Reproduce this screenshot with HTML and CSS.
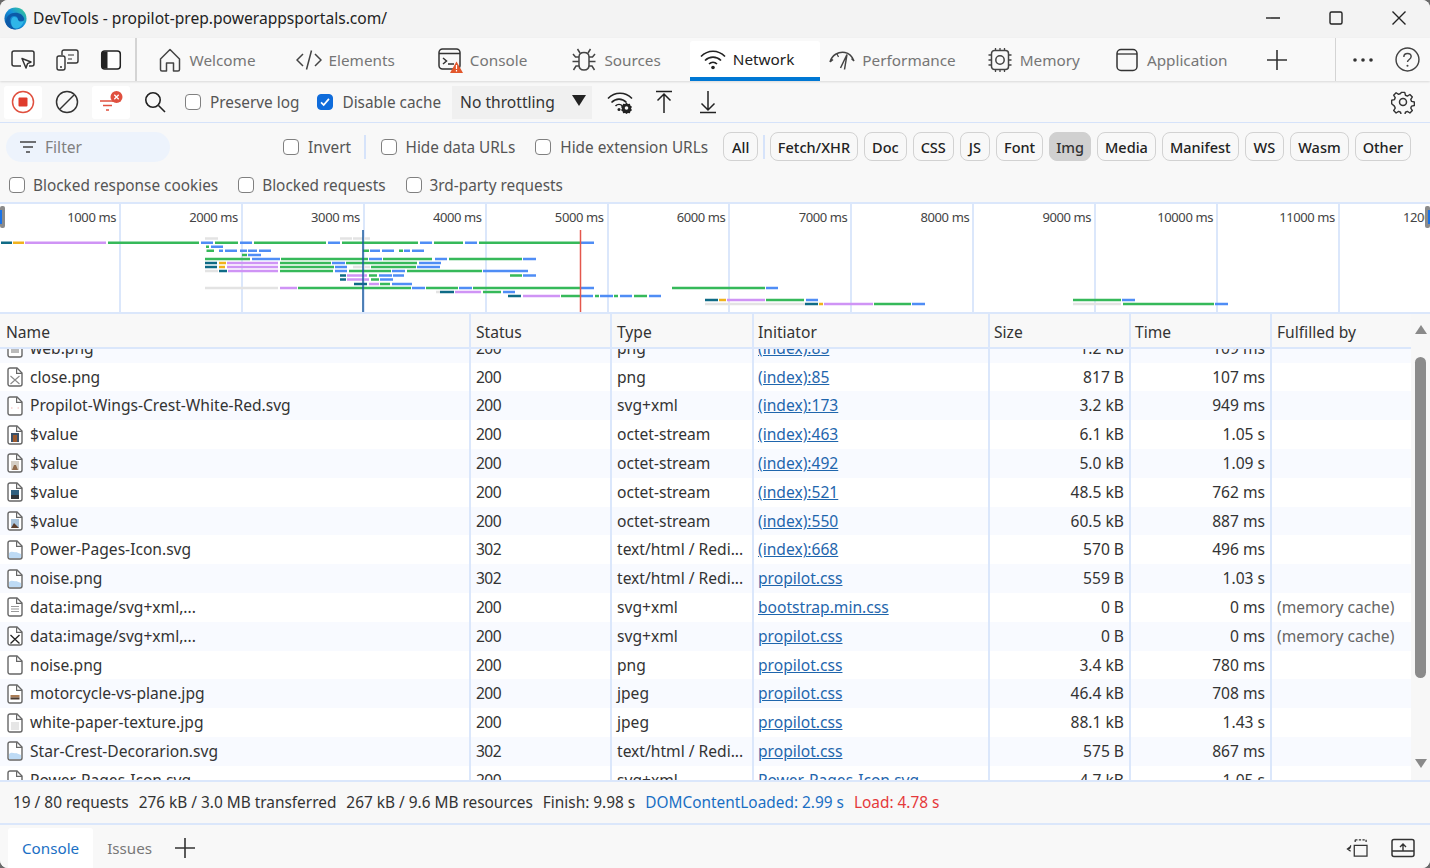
FILE: index.html
```html
<!DOCTYPE html>
<html lang="en">
<head>
<meta charset="utf-8">
<title>DevTools</title>
<link rel="stylesheet" href="styles.css">
</head>
<body>
<svg class="defs" width="0" height="0" aria-hidden="true">
  <defs>
    <symbol id="page" viewBox="0 0 16 20"><path d="M1 3a2 2 0 0 1 2-2h7l5 5v11a2 2 0 0 1-2 2H3a2 2 0 0 1-2-2z" fill="#fff" stroke="#666" stroke-width="1.4"/><path d="M9.6 1.2V6.4H15" fill="none" stroke="#666" stroke-width="1.2"/></symbol>
    <symbol id="plus" viewBox="0 0 20 20"><path d="M10 0v20M0 10h20" stroke="#333" stroke-width="1.6"/></symbol>
    <linearGradient id="edgeA" x1="0" y1="1" x2="1" y2="0"><stop offset="0" stop-color="#0b4f9e"/><stop offset=".55" stop-color="#1593dc"/><stop offset="1" stop-color="#3fd08a"/></linearGradient>
  </defs>
</svg>
<div class="window">
  <header class="titlebar">
    <svg class="logo" viewBox="0 0 24 24"><circle cx="12" cy="12" r="11.5" fill="url(#edgeA)"/><path d="M2 16C2 9 7 6 12 6c4.500 0 8 2.500 9 6 .4 2-1.500 3.500-4 3.500-2 0-3-.6-3-1.500 1-1.500 0-4.500-3.500-4.500C7 9.500 5 13 6.500 17c1 3 3.500 5 6 6.500C7 23.500 2 20.500 2 16z" fill="#0c5aa8"/><path d="M8 12c2-2.500 6-1.500 6.500 1 .5 2 3 3 6 1.500-1 5-5 8-8.500 8-3 0-6-5-4-10.500z" fill="#2fb6e8"/></svg>
    <span class="title">DevTools - propilot-prep.powerappsportals.com/</span>
    <div class="winctl">
      <svg viewBox="0 0 16 16"><path d="M1 8h14" stroke="#222" stroke-width="1.4"/></svg>
      <svg viewBox="0 0 16 16"><rect x="2" y="2" width="12" height="12" rx="1.500" fill="none" stroke="#222" stroke-width="1.4"/></svg>
      <svg viewBox="0 0 16 16"><path d="M1.500 1.500l13 13M14.500 1.500l-13 13" stroke="#222" stroke-width="1.4"/></svg>
    </div>
  </header>

  <nav class="tabbar">
    <div class="tabtools">
      <svg class="ti" viewBox="0 0 26 22"><path d="M11 17H4a2 2 0 0 1-2-2V4a2 2 0 0 1 2-2h18a2 2 0 0 1 2 2v11a2 2 0 0 1-2 2h-3" fill="none" stroke="#333" stroke-width="1.500"/><path d="M12 9.500l9 3.500-3.500 1.700 0 0L16 19z" fill="#fff" stroke="#333" stroke-width="1.500" stroke-linejoin="round"/></svg>
      <svg class="ti" viewBox="0 0 26 22"><path d="M8 6V3a2 2 0 0 1 2-2h12a2 2 0 0 1 2 2v9a2 2 0 0 1-2 2h-9" fill="none" stroke="#333" stroke-width="1.400"/><rect x="3" y="7" width="8" height="14" rx="2" fill="#fbfbfb" stroke="#333" stroke-width="1.400"/><path d="M14 6h6M14 10h4" stroke="#333" stroke-width="1.200"/><path d="M6 18h2" stroke="#333" stroke-width="1.400"/></svg>
      <svg class="ti" viewBox="0 0 26 22"><rect x="3.700" y="2" width="18.600" height="18" rx="3" fill="#fff" stroke="#222" stroke-width="1.500"/><path d="M5 2.500h4.500v17H5a1 1 0 0 1-1-1v-15a1 1 0 0 1 1-1z" fill="#222"/></svg>
    </div>
    <div class="vsep"></div>
    <div class="tabs">
      <a class="tab tab-welcome"><svg class="tabicon" viewBox="0 0 26 26"><path d="M3.500 12L13 2.500 22.500 12v10.500a1.500 1.500 0 0 1-1.500 1.500h-4.500v-8h-7v8H5a1.500 1.500 0 0 1-1.500-1.500z" fill="none" stroke="#444" stroke-width="1.500" stroke-linejoin="round"/></svg>Welcome</a>
      <a class="tab tab-elements"><svg class="tabicon" viewBox="0 0 26 26"><path d="M7 7L1 13l6 6M19 7l6 6-6 6M15.500 3.500l-5 19" fill="none" stroke="#444" stroke-width="1.500"/></svg>Elements</a>
      <a class="tab tab-console"><svg class="tabicon" viewBox="0 0 26 26"><rect x="2" y="2" width="21" height="20" rx="3.500" fill="none" stroke="#333" stroke-width="1.500"/><path d="M2 6.500h21M6 11l3.500 3L6 17M11 17h6" fill="none" stroke="#333" stroke-width="1.500"/><path d="M19.500 14.500L26 26H13z" fill="#e2572c"/><path d="M19.500 18v4M19.500 23v1.500" stroke="#fff" stroke-width="1.200"/></svg>Console</a>
      <a class="tab tab-sources"><svg class="tabicon" viewBox="0 0 26 26"><path d="M8 10c0-3 2-4.500 5-4.500S18 7 18 10v8c0 3-2 5-5 5s-5-2-5-5z" fill="none" stroke="#444" stroke-width="1.500"/><path d="M9 6L6.500 2M17 6l2.500-4M8 10H4.500L2 7M18 10h3.500L24 7M8 14.500H1.500M18 14.500h6.500M8 19H5l-2.500 4M18 19h3l2.500 4" fill="none" stroke="#444" stroke-width="1.500"/></svg>Sources</a>
      <a class="tab tab-network active"><svg class="tabicon" viewBox="0 0 26 26"><path d="M1 10.500c7-7 17-7 24 0M5 14.500c4.500-4.500 11.500-4.500 16 0M9 18c2.300-2.200 5.700-2.200 8 0" fill="none" stroke="#222" stroke-width="1.700"/><circle cx="13" cy="21.500" r="1.800" fill="#222"/></svg>Network</a>
      <a class="tab tab-performance"><svg class="tabicon" viewBox="0 0 26 26"><path d="M1 15C3 8 9 4.500 16 5.500c4 .6 7 3.500 9 8.500M1 15l3-2.500M25 14l-2.500-2.500M11.500 21L18 7.500l-2.500 15" fill="none" stroke="#444" stroke-width="1.500"/><path d="M8 7l1.500 3" stroke="#444" stroke-width="1.300"/></svg>Performance</a>
      <a class="tab tab-memory"><svg class="tabicon" viewBox="0 0 26 26"><rect x="4.500" y="3.500" width="17" height="19" rx="3" fill="none" stroke="#444" stroke-width="1.500"/><circle cx="13" cy="13" r="4.200" fill="none" stroke="#444" stroke-width="1.500"/><path d="M8.500 1v2.500M13 1v2.500M17.500 1v2.500M8.500 22.500V25M13 22.500V25M17.500 22.500V25M1.500 8h3M1.500 13h3M1.500 18h3M21.500 8h3M21.500 13h3M21.500 18h3" stroke="#444" stroke-width="1.300"/></svg>Memory</a>
      <a class="tab tab-application"><svg class="tabicon" viewBox="0 0 26 26"><rect x="3" y="2.500" width="20" height="21" rx="4" fill="none" stroke="#333" stroke-width="1.500"/><path d="M3 7h20" stroke="#333" stroke-width="1.300"/></svg>Application</a>
      <svg class="addtab" viewBox="0 0 20 20"><use href="#plus"/></svg>
    </div>
    <div class="vsep vsep-right"></div>
    <svg class="more" viewBox="0 0 22 6"><circle cx="3" cy="3" r="1.800" fill="#333"/><circle cx="11" cy="3" r="1.800" fill="#333"/><circle cx="19" cy="3" r="1.800" fill="#333"/></svg>
    <svg class="help" viewBox="0 0 24 24"><circle cx="12" cy="12" r="11" fill="none" stroke="#444" stroke-width="1.400"/><path d="M8.500 9.500c0-2 1.500-3.300 3.500-3.300s3.500 1.300 3.500 3c0 2.800-3.500 2.800-3.500 5.300" fill="none" stroke="#444" stroke-width="1.400"/><circle cx="12" cy="18" r="1" fill="#444"/></svg>
  </nav>

  <section class="toolbar">
    <span class="tbtn tbtn-on"><svg viewBox="0 0 24 24" class="ic24"><circle cx="12" cy="12" r="10.500" fill="none" stroke="#e0503f" stroke-width="1.500"/><rect x="7.500" y="7.500" width="9" height="9" rx="1" fill="#df3b2c"/></svg></span>
    <span class="tbtn"><svg viewBox="0 0 24 24" class="ic24"><circle cx="12" cy="12" r="10.500" fill="none" stroke="#333" stroke-width="1.500"/><path d="M19 5L5 19" stroke="#333" stroke-width="1.500"/></svg></span>
    <span class="tbtn tbtn-on"><svg viewBox="0 0 26 24" class="ic24 wide"><path d="M2 11h15M5 15.500h9M8 20h3" stroke="#e0503f" stroke-width="1.600"/><circle cx="18.500" cy="7" r="6" fill="#e0503f"/><path d="M16.300 4.800l4.400 4.400M20.700 4.800l-4.400 4.400" stroke="#fff" stroke-width="1.300"/></svg></span>
    <span class="tbtn"><svg viewBox="0 0 24 24" class="ic24"><circle cx="10" cy="10" r="7.200" fill="none" stroke="#222" stroke-width="1.600"/><path d="M15.500 15.500L22 22" stroke="#222" stroke-width="1.600"/></svg></span>
    <label class="check check-preserve"><span class="box"></span>Preserve log</label>
    <label class="check check-cache"><span class="box on"><svg viewBox="0 0 16 16"><path d="M3.500 8.500l3 3 6-7" fill="none" stroke="#fff" stroke-width="2"/></svg></span>Disable cache</label>
    <div class="select">No throttling<span class="caret"></span></div>
    <span class="tbtn tbtn-net"><svg viewBox="0 0 26 24" class="ic24 wide"><path d="M1 8.500c7-7 17-7 24 0M4.500 12.500c4.500-4.500 10.500-4.500 15 0M8.500 16c2-2 5-2 7 0" fill="none" stroke="#222" stroke-width="1.600"/><circle cx="12" cy="19.500" r="1.500" fill="#222"/><path d="M19.500 12.500l1.400 1.500 2-.3.600 2 1.500 1-1 1.800 1 1.700-1.500 1-.6 2-2-.3-1.400 1.100-1.400-1.100-2 .3-.6-2-1.500-1 1-1.700-1-1.800 1.500-1 .6-2 2 .3z" fill="#222"/><circle cx="19.500" cy="18" r="1.800" fill="#f9f9f9"/></svg></span>
    <span class="tbtn"><svg viewBox="0 0 24 24" class="ic24"><path d="M4 1.500h16M12 23V4M5.500 10.500L12 4l6.500 6.500" fill="none" stroke="#222" stroke-width="1.500"/></svg></span>
    <span class="tbtn"><svg viewBox="0 0 24 24" class="ic24"><path d="M4 22.500h16M12 1v19M5.500 13.500L12 20l6.500-6.500" fill="none" stroke="#222" stroke-width="1.500"/></svg></span>
    <svg viewBox="0 0 24 24" class="ic24 gear"><path d="M10 1h4l.8 3.300 2.200.9 2.900-1.800 2.800 2.800-1.800 2.900.9 2.200 3.200.7v4l-3.200.7-.9 2.200 1.800 2.900-2.800 2.800-2.900-1.800-2.200.9-.8 3.300h-4l-.8-3.300-2.200-.9-2.900 1.800-2.800-2.800 1.800-2.900-.9-2.200L-1 14v-4l3.200-.7.900-2.200-1.800-2.900 2.800-2.800 2.900 1.800 2.200-.9z" transform="translate(1.500 1.500) scale(.875)" fill="none" stroke="#333" stroke-width="1.600" stroke-linejoin="round"/><circle cx="12" cy="12" r="3.500" fill="none" stroke="#333" stroke-width="1.500"/></svg>
  </section>

  <section class="filterrow">
    <div class="filterbox"><svg viewBox="0 0 16 12" class="filtericon"><path d="M0 1h16M3 6h10M6 11h4" stroke="#444" stroke-width="1.500"/></svg>Filter</div>
    <label class="check check-invert"><span class="box"></span>Invert</label>
    <span class="fsep fsep-a"></span>
    <label class="check check-data"><span class="box"></span>Hide data URLs</label>
    <label class="check check-ext"><span class="box"></span>Hide extension URLs</label>
    <div class="pills">
      <span class="pill pill-all">All</span>
      <span class="fsep"></span>
      <span class="pill">Fetch/XHR</span>
      <span class="pill">Doc</span>
      <span class="pill">CSS</span>
      <span class="pill pill-js">JS</span>
      <span class="pill">Font</span>
      <span class="pill sel">Img</span>
      <span class="pill">Media</span>
      <span class="pill">Manifest</span>
      <span class="pill pill-ws">WS</span>
      <span class="pill">Wasm</span>
      <span class="pill">Other</span>
    </div>
  </section>

  <section class="blockrow">
    <label class="check"><span class="box"></span>Blocked response cookies</label>
    <label class="check"><span class="box"></span>Blocked requests</label>
    <label class="check"><span class="box"></span>3rd-party requests</label>
  </section>

  <section class="overview">
    <div class="ruler">
      <div class="tick tick-first">1000 ms</div><div class="tick">2000 ms</div><div class="tick">3000 ms</div><div class="tick">4000 ms</div><div class="tick">5000 ms</div><div class="tick">6000 ms</div><div class="tick">7000 ms</div><div class="tick">8000 ms</div><div class="tick">9000 ms</div><div class="tick">10000 ms</div><div class="tick">11000 ms</div><div class="tick tick-last">12000 ms</div>
    </div>
    <svg class="bars" viewBox="0 202 1430 110" width="1430" height="110">
      <g class="g"><path d="M108 242.700h91M215 242.700h23M254 242.700h72M342 242.700h76M434 242.700h29M479 242.700h101M206 246.700h3M206.500 250.700h7.500M363 250.700h6M399 250.700h4M242 255h5M205 259h45M281 259h87M383 259h49M449 259h73M280 263h51M346 263h71M280 267h54M371 267h45M280 271h53M349 271h42M407 271h75M369 275.500h8M510 275.500h12M371 279.500h8M380 284h10M298 288h113M426 288h32M473 288h107M672 288h93M483 292h18M561 296h19M595 296h4M614 296h4M634 296h13M766 300h38M1073 300h48M874 304h37M1123 304h91"/></g>
      <g class="b"><path d="M201 242.700h12M240 242.700h12M328 242.700h12M420 242.700h12M465 242.700h12M581 242.700h13M211 246.700h12M219 250.700h4M225 250.700h12M240 250.700h7M248 250.700h9M259 250.700h12M370 250.700h10M382 250.700h12M404 250.700h6M412 250.700h12M248 255h13M252 259h28M369 259h13M435 259h12M523 259h13M332 263h13M419 263h22M335 267h12M417 267h23M335 271h12M392 271h13M483 271h45M379 275.500h13M393 275.500h11M523 275.500h13M380 279.500h13M392 284h20M412 288h13M459 288h13M581 288h13M766 288h12M503 292h12M581 296h12M600 296h13M620 296h12M649 296h12M806 300h12M1122 300h13M912 304h13M1215 304h13"/></g>
      <g class="t"><path d="M1 242.700h11M205 263h12M205 267h12M219 271h8M340 275.500h6M340 279.500h6M354 284h13M440 292h14M508 296h13M705 300h13M805 304h13"/></g>
      <g class="o"><path d="M13 242.700h11M219 263h7M219 267h6M719 300h7M819 304h4"/></g>
      <g class="p"><path d="M25 242.700h81M227 263h51M227 267h51M228 271h50M347 275.500h20M347 279.500h22M369 284h10M280 288h17M455 292h26M523 296h37M727 300h38M824 304h49"/></g>
      <g class="y"><path d="M205 238.500h13M340 238.500h12M353 238.500h17M205 271h13M353 267h17M205 288h73M436 292h4M705 304h100M1073 304h48"/></g>
      <path d="M363 230v82" class="dom"/>
      <path d="M580.500 230v82" class="load"/>
    </svg>
    <span class="grip grip-left"></span>
    <span class="grip grip-right"></span>
  </section>

  <section class="grid">
    <div class="gridmain">
      <div class="row head"><div>Name</div><div>Status</div><div>Type</div><div>Initiator</div><div>Size</div><div>Time</div><div>Fulfilled by</div></div>
      <div class="rows">
        <div class="rowsinner">
          <div class="row"><div class="nm"><svg class="fi" viewBox="0 0 16 20"><use href="#page"/><rect x="4" y="9" width="8" height="6" fill="#bbb"/></svg>web.png</div><div>200</div><div>png</div><div><a>(index):85</a></div><div class="r">1.2 kB</div><div class="r">109 ms</div><div></div></div>
          <div class="row"><div class="nm"><svg class="fi" viewBox="0 0 16 20"><use href="#page"/><path d="M3.500 9l9 8M12.500 9l-9 8" stroke="#888" stroke-width="1.100"/></svg>close.png</div><div>200</div><div>png</div><div><a>(index):85</a></div><div class="r">817 B</div><div class="r">107 ms</div><div></div></div>
          <div class="row"><div class="nm"><svg class="fi" viewBox="0 0 16 20"><use href="#page"/><path d="M4 12h1.500M10.500 12H12" stroke="#f3b7b7" stroke-width="1.200"/></svg>Propilot-Wings-Crest-White-Red.svg</div><div>200</div><div>svg+xml</div><div><a>(index):173</a></div><div class="r">3.2 kB</div><div class="r">949 ms</div><div></div></div>
          <div class="row"><div class="nm"><svg class="fi" viewBox="0 0 16 20"><use href="#page"/><rect x="4" y="8" width="8" height="9" fill="#3c5168"/><rect x="6" y="10" width="4" height="7" fill="#9c5a2f"/></svg>$value</div><div>200</div><div>octet-stream</div><div><a>(index):463</a></div><div class="r">6.1 kB</div><div class="r">1.05 s</div><div></div></div>
          <div class="row"><div class="nm"><svg class="fi" viewBox="0 0 16 20"><use href="#page"/><rect x="4" y="8" width="8" height="9" fill="#d5cfc5"/><path d="M5 17l2-5h2l2 5z" fill="#8f6a4b"/></svg>$value</div><div>200</div><div>octet-stream</div><div><a>(index):492</a></div><div class="r">5.0 kB</div><div class="r">1.09 s</div><div></div></div>
          <div class="row"><div class="nm"><svg class="fi" viewBox="0 0 16 20"><use href="#page"/><rect x="4" y="8" width="8" height="9" fill="#2f5f7f"/><rect x="4" y="13" width="8" height="4" fill="#2f3338"/></svg>$value</div><div>200</div><div>octet-stream</div><div><a>(index):521</a></div><div class="r">48.5 kB</div><div class="r">762 ms</div><div></div></div>
          <div class="row"><div class="nm"><svg class="fi" viewBox="0 0 16 20"><use href="#page"/><rect x="4" y="8" width="8" height="9" fill="#a9c3da"/><path d="M4 17l3-5 2 2 3 3z" fill="#5d3f2c"/></svg>$value</div><div>200</div><div>octet-stream</div><div><a>(index):550</a></div><div class="r">60.5 kB</div><div class="r">887 ms</div><div></div></div>
          <div class="row"><div class="nm"><svg class="fi" viewBox="0 0 16 20"><use href="#page"/><path d="M2 18v-5c3-3 5 0 7-1l5 2v4z" fill="#bedbf5"/></svg>Power-Pages-Icon.svg</div><div>302</div><div>text/html / Redi...</div><div><a>(index):668</a></div><div class="r">570 B</div><div class="r">496 ms</div><div></div></div>
          <div class="row"><div class="nm"><svg class="fi" viewBox="0 0 16 20"><use href="#page"/><path d="M2 18v-5c3-3 5 0 7-1l5 2v4z" fill="#bedbf5"/></svg>noise.png</div><div>302</div><div>text/html / Redi...</div><div><a>propilot.css</a></div><div class="r">559 B</div><div class="r">1.03 s</div><div></div></div>
          <div class="row"><div class="nm"><svg class="fi" viewBox="0 0 16 20"><use href="#page"/><path d="M4 9.500h8M4 12h8M4 14.500h8" stroke="#999" stroke-width="1"/></svg>data:image/svg+xml,...</div><div>200</div><div>svg+xml</div><div><a>bootstrap.min.css</a></div><div class="r">0 B</div><div class="r">0 ms</div><div class="mc">(memory cache)</div></div>
          <div class="row"><div class="nm"><svg class="fi" viewBox="0 0 16 20"><use href="#page"/><path d="M3.500 9l9 8.500M12.500 9l-9 8.500" stroke="#222" stroke-width="1.300"/></svg>data:image/svg+xml,...</div><div>200</div><div>svg+xml</div><div><a>propilot.css</a></div><div class="r">0 B</div><div class="r">0 ms</div><div class="mc">(memory cache)</div></div>
          <div class="row"><div class="nm"><svg class="fi" viewBox="0 0 16 20"><use href="#page"/></svg>noise.png</div><div>200</div><div>png</div><div><a>propilot.css</a></div><div class="r">3.4 kB</div><div class="r">780 ms</div><div></div></div>
          <div class="row"><div class="nm"><svg class="fi" viewBox="0 0 16 20"><use href="#page"/><rect x="3.500" y="11" width="9" height="2.500" fill="#ab7d55"/><rect x="3.500" y="13.500" width="9" height="2" fill="#4a3a30"/></svg>motorcycle-vs-plane.jpg</div><div>200</div><div>jpeg</div><div><a>propilot.css</a></div><div class="r">46.4 kB</div><div class="r">708 ms</div><div></div></div>
          <div class="row"><div class="nm"><svg class="fi" viewBox="0 0 16 20"><use href="#page"/><rect x="4" y="9" width="8" height="8" fill="#e6e6e6"/></svg>white-paper-texture.jpg</div><div>200</div><div>jpeg</div><div><a>propilot.css</a></div><div class="r">88.1 kB</div><div class="r">1.43 s</div><div></div></div>
          <div class="row"><div class="nm"><svg class="fi" viewBox="0 0 16 20"><use href="#page"/><path d="M2 18v-5c3-3 5 0 7-1l5 2v4z" fill="#bedbf5"/></svg>Star-Crest-Decorarion.svg</div><div>302</div><div>text/html / Redi...</div><div><a>propilot.css</a></div><div class="r">575 B</div><div class="r">867 ms</div><div></div></div>
          <div class="row"><div class="nm"><svg class="fi" viewBox="0 0 16 20"><use href="#page"/><circle cx="8" cy="13" r="3" fill="#b7a5ea"/></svg>Power-Pages-Icon.svg</div><div>200</div><div>svg+xml</div><div><a>Power-Pages-Icon.svg</a></div><div class="r">4.7 kB</div><div class="r">1.05 s</div><div></div></div>
        </div>
      </div>
    </div>
    <aside class="scrollbar">
      <span class="arrow up"></span>
      <span class="thumb"></span>
      <span class="arrow down"></span>
    </aside>
  </section>

  <footer class="status">
    <span>19 / 80 requests</span><span>276 kB / 3.0 MB transferred</span><span>267 kB / 9.6 MB resources</span><span>Finish: 9.98 s</span><span class="dcl">DOMContentLoaded: 2.99 s</span><span class="ld">Load: 4.78 s</span>
  </footer>

  <nav class="drawer">
    <a class="dtab on">Console</a>
    <a class="dtab">Issues</a>
    <svg class="addtab dplus" viewBox="0 0 20 20"><use href="#plus"/></svg>
    <svg class="dicon push" viewBox="0 0 26 22"><path d="M6 9.500L2.500 12 6 14.500M3 12c2 0 3-1 3-4" fill="none" stroke="#333" stroke-width="1.400"/><path d="M10 8h14v12H10z" fill="none" stroke="#333" stroke-width="1.400"/><path d="M11 2h12M11 2v4M23 2v4" fill="none" stroke="#333" stroke-width="1.400" stroke-dasharray="2.500 1.500"/></svg>
    <svg class="dicon" viewBox="0 0 24 20"><rect x="1" y="1.500" width="22" height="17" rx="2" fill="none" stroke="#333" stroke-width="1.500"/><path d="M1 13h22M12 13V6M9 9l3-3 3 3" fill="none" stroke="#333" stroke-width="1.400"/></svg>
  </nav>
</div>
</body>
</html>
```

FILE: styles.css
```css
* { box-sizing: border-box; }
html, body { margin: 0; padding: 0; height: 100%; background: #6a6a6a; }
body {
  font-family: "Noto Sans", "Open Sans", sans-serif;
  font-size: 15.600px;
  color: #333;
  overflow: hidden;
}
.defs { position: absolute; }
.window {
  width: 1430px;
  height: 868px;
  display: flex;
  flex-direction: column;
  background: #f8f8f8;
  border-radius: 8px;
  overflow: hidden;
}
svg { display: block; flex: none; }

/* title bar */
.titlebar {
  height: 38px;
  background: #f3f3f3;
  display: flex;
  align-items: center;
  padding: 0 0 2px 4px;
  flex: none;
}
.logo { width: 23px; height: 23px; }
.title { margin-left: 6px; color: #222; }
.winctl { margin-left: auto; display: flex; gap: 47px; padding-right: 23px; }
.winctl svg { width: 16px; height: 16px; }

/* main tabs */
.tabbar {
  height: 43px;
  flex: none;
  background: #f9f9f9;
  display: flex;
  align-items: stretch;
  box-shadow: 0 1px 2px rgba(0,0,0,.12);
  position: relative;
}
.tabtools { display: flex; align-items: center; gap: 18px; padding-left: 10px; width: 135px; }
.ti { width: 26px; height: 22px; }
.vsep { width: 1.500px; background: #d4d4d4; }
.tabs { display: flex; align-items: stretch; padding-left: 10px; width: 1198px; }
.tab {
  display: flex;
  align-items: center;
  gap: 7px;
  padding: 1px 26px 0 10px;
  color: #767676;
  font-size: 15.300px;
  border-radius: 3px 3px 0 0;
}
.tab-welcome { margin-right: 4px; }
.tab-elements { margin-right: 6px; }
.tab-console { margin-right: 8px; }
.tab-sources { margin-right: 3px; }
.tab-network { margin-right: -1px; }
.tab-performance { margin-right: -5px; }
.tab-memory { margin-right: -2px; }
.tab-application { margin-right: 14px; }
.tabicon { width: 26px; height: 26px; }
.tab.active { background: #fff; color: #222; border-bottom: 4px solid #0078d4; margin-top: 3px; padding-top: 0; }
.addtab { width: 20px; height: 20px; align-self: center; }
.more { width: 22px; height: 6px; align-self: center; margin-left: 16px; }
.help { width: 25px; height: 25px; align-self: center; margin-left: 21px; }

/* toolbar */
.toolbar {
  height: 42px;
  flex: none;
  display: flex;
  align-items: center;
  padding: 1px 15px 0 4px;
  border-bottom: 1px solid #d6e3fa;
  background: #f8f8f8;
}
.tbtn { width: 38px; height: 33px; display: flex; align-items: center; justify-content: center; margin-right: 6px; flex: none; }
.tbtn-on { background: #fff; border-radius: 3px; }
.ic24 { width: 24px; height: 24px; }
.wide { width: 26px; }
.check { display: flex; align-items: center; gap: 9px; color: #555; font-size: 15.350px; white-space: nowrap; flex: none; }
.box {
  width: 16px;
  height: 16px;
  border: 1.500px solid #808080;
  border-radius: 4px;
  background: #fff;
  flex: none;
}
.box.on { background: #0f6cdb; border-color: #0f6cdb; }
.box svg { width: 100%; height: 100%; }
.check-preserve { margin-left: 5px; }
.check-cache { margin-left: 18px; }
.select {
  margin-left: 11px;
  width: 140px;
  height: 33px;
  background: #f0f0f0;
  display: flex;
  align-items: center;
  padding-left: 8px;
  color: #333;
  flex: none;
}
.caret {
  margin-left: auto;
  margin-right: 6px;
  margin-bottom: 4px;
  width: 0; height: 0;
  border-left: 7px solid transparent;
  border-right: 7px solid transparent;
  border-top: 11px solid #222;
}
.tbtn-net { margin-left: 9px; }
.gear { margin-left: auto; }

/* filter rows */
.filterrow {
  height: 43px;
  flex: none;
  display: flex;
  align-items: center;
  padding: 4px 0 0 6px;
}
.filterbox {
  width: 164px;
  height: 30px;
  border-radius: 15px;
  background: #edf3fc;
  display: flex;
  align-items: center;
  gap: 9px;
  padding-left: 14px;
  color: #808080;
  flex: none;
}
.filtericon { width: 16px; height: 12px; }
.check-invert { margin-left: 113px; }
.fsep { width: 1.500px; height: 24px; background: #d6e3fa; flex: none; }
.fsep-a { margin-left: 13px; }
.check-data { margin-left: 15px; }
.check-ext { margin-left: 20px; }
.pills { display: flex; align-items: center; gap: 6px; margin-left: 15px; flex: none; }
.pills .fsep { margin: 0 -1px; }
.pill {
  height: 29px;
  display: flex;
  align-items: center;
  padding: 0 7px;
  border: 1.500px solid #d2d2d2;
  border-radius: 8px;
  color: #222;
  font-size: 14.500px;
  font-weight: 500;
}
.pill-all, .pill-js, .pill-ws { padding: 0 8px; }
.pill.sel { background: #d0d0d0; border-color: #d0d0d0; color: #333; padding: 0 6px; }
.blockrow {
  height: 36px;
  flex: none;
  display: flex;
  align-items: center;
  gap: 20px;
  padding: 1px 0 0 9px;
}
.blockrow .check { gap: 8px; }

/* overview */
.overview {
  height: 112px;
  flex: none;
  background: #fff;
  position: relative;
  border-top: 2px solid #dbe7fb;
  border-bottom: 2px solid #dbe7fb;
  overflow: hidden;
}
.ruler { display: flex; height: 100%; }
.tick {
  width: 121.900px;
  flex: none;
  border-right: 2px solid #dbe7fb;
  text-align: right;
  padding: 4px 3px 0 0;
  font-size: 13px;
  letter-spacing: -.4px;
  color: #444;
  white-space: nowrap;
}
.tick-first { width: 121px; }
.tick-last { border-right: 0; }
.bars { position: absolute; left: 0; top: -2px; }
.bars g path { stroke-width: 2.600; fill: none; }
.g path { stroke: #36b95a; }
.b path { stroke: #4f8df5; }
.t path { stroke: #0f6b86; }
.o path { stroke: #f0b21e; }
.p path { stroke: #cf94f5; }
.y path { stroke: #e3e3e3; }
.dom { stroke: #1a5a9f; stroke-width: 1.500; }
.load { stroke: #e4574c; stroke-width: 1.500; }
.grip { position: absolute; top: 2px; width: 5px; height: 22px; border-radius: 2px; }
.grip-left { left: 0; background: linear-gradient(#1a73e8, #1a73e8) no-repeat 0 50% / 2px 14px, #8b8b8b; }
.grip-right { right: 0; background: linear-gradient(#1a73e8, #1a73e8) no-repeat 3px 50% / 2px 14px, #8b8b8b; }

/* grid */
.grid { flex: 1; min-height: 0; display: flex; }
.gridmain { width: 1411px; display: flex; flex-direction: column; background: #fff; }
.row {
  display: grid;
  grid-template-columns: 471px 141px 142px 236px 141px 141px 139px;
  height: 28.800px;
  line-height: 28.800px;
}
.row > div { padding: 0 5px 0 5px; border-right: 2px solid #dbe7fb; white-space: nowrap; overflow: hidden; }
.row > div:nth-child(4), .row > div:nth-child(5), .row > div:nth-child(6) { padding-left: 4px; }
.row > div:last-child { border-right: 0; }
.rows { flex: 1; min-height: 0; overflow: hidden; }
.rowsinner { margin-top: -15.200px; }
.rowsinner .row:nth-child(odd) { background: #f8faff; }
.rowsinner .row > div:nth-child(2) { letter-spacing: -.6px; }
.head { height: 35px; line-height: 36px; background: #f8f8f8; flex: none; border-bottom: 2px solid #dbe7fb; }
.nm { display: flex; align-items: center; gap: 7px; padding-left: 7px !important; }
.head > div:first-child { padding-left: 6px; }
.fi { width: 16px; height: 20px; }
.r { text-align: right; }
.mc { color: #666; }
.row a { color: #1f66ad; text-decoration: underline; }
.scrollbar {
  width: 19px;
  background: #f7f7f7;
  display: flex;
  flex-direction: column;
  align-items: center;
  padding: 11px 0 12px;
}
.arrow { width: 0; height: 0; border-left: 6px solid transparent; border-right: 6px solid transparent; flex: none; }
.arrow.up { border-bottom: 9px solid #8a8a8a; }
.arrow.down { border-top: 9px solid #8a8a8a; margin-top: auto; }
.thumb { width: 11px; height: 321px; background: #8b8b8b; border-radius: 6px; margin-top: 23px; flex: none; }

/* status + drawer */
.status {
  height: 45px;
  flex: none;
  display: flex;
  align-items: center;
  gap: 10px;
  padding-left: 13px;
  border-top: 2px solid #dbe7fb;
  border-bottom: 2px solid #dbe7fb;
  font-size: 15.400px;
  color: #333;
}
.dcl { color: #1a6fc4; }
.ld { color: #e5383b; }
.drawer {
  height: 43px;
  flex: none;
  display: flex;
  align-items: stretch;
  padding: 3px 15px 0 8px;
  background: #f8f8f8;
}
.dtab { display: flex; align-items: center; padding: 0 14px; color: #777; font-size: 15.200px; }
.dtab.on { background: #fff; color: #1a6fc4; border-radius: 3px 3px 0 0; }
.dplus { margin-left: 9px; }
.dicon { width: 24px; height: 20px; align-self: center; }
.push { margin-left: auto; margin-right: 22px; }
```
